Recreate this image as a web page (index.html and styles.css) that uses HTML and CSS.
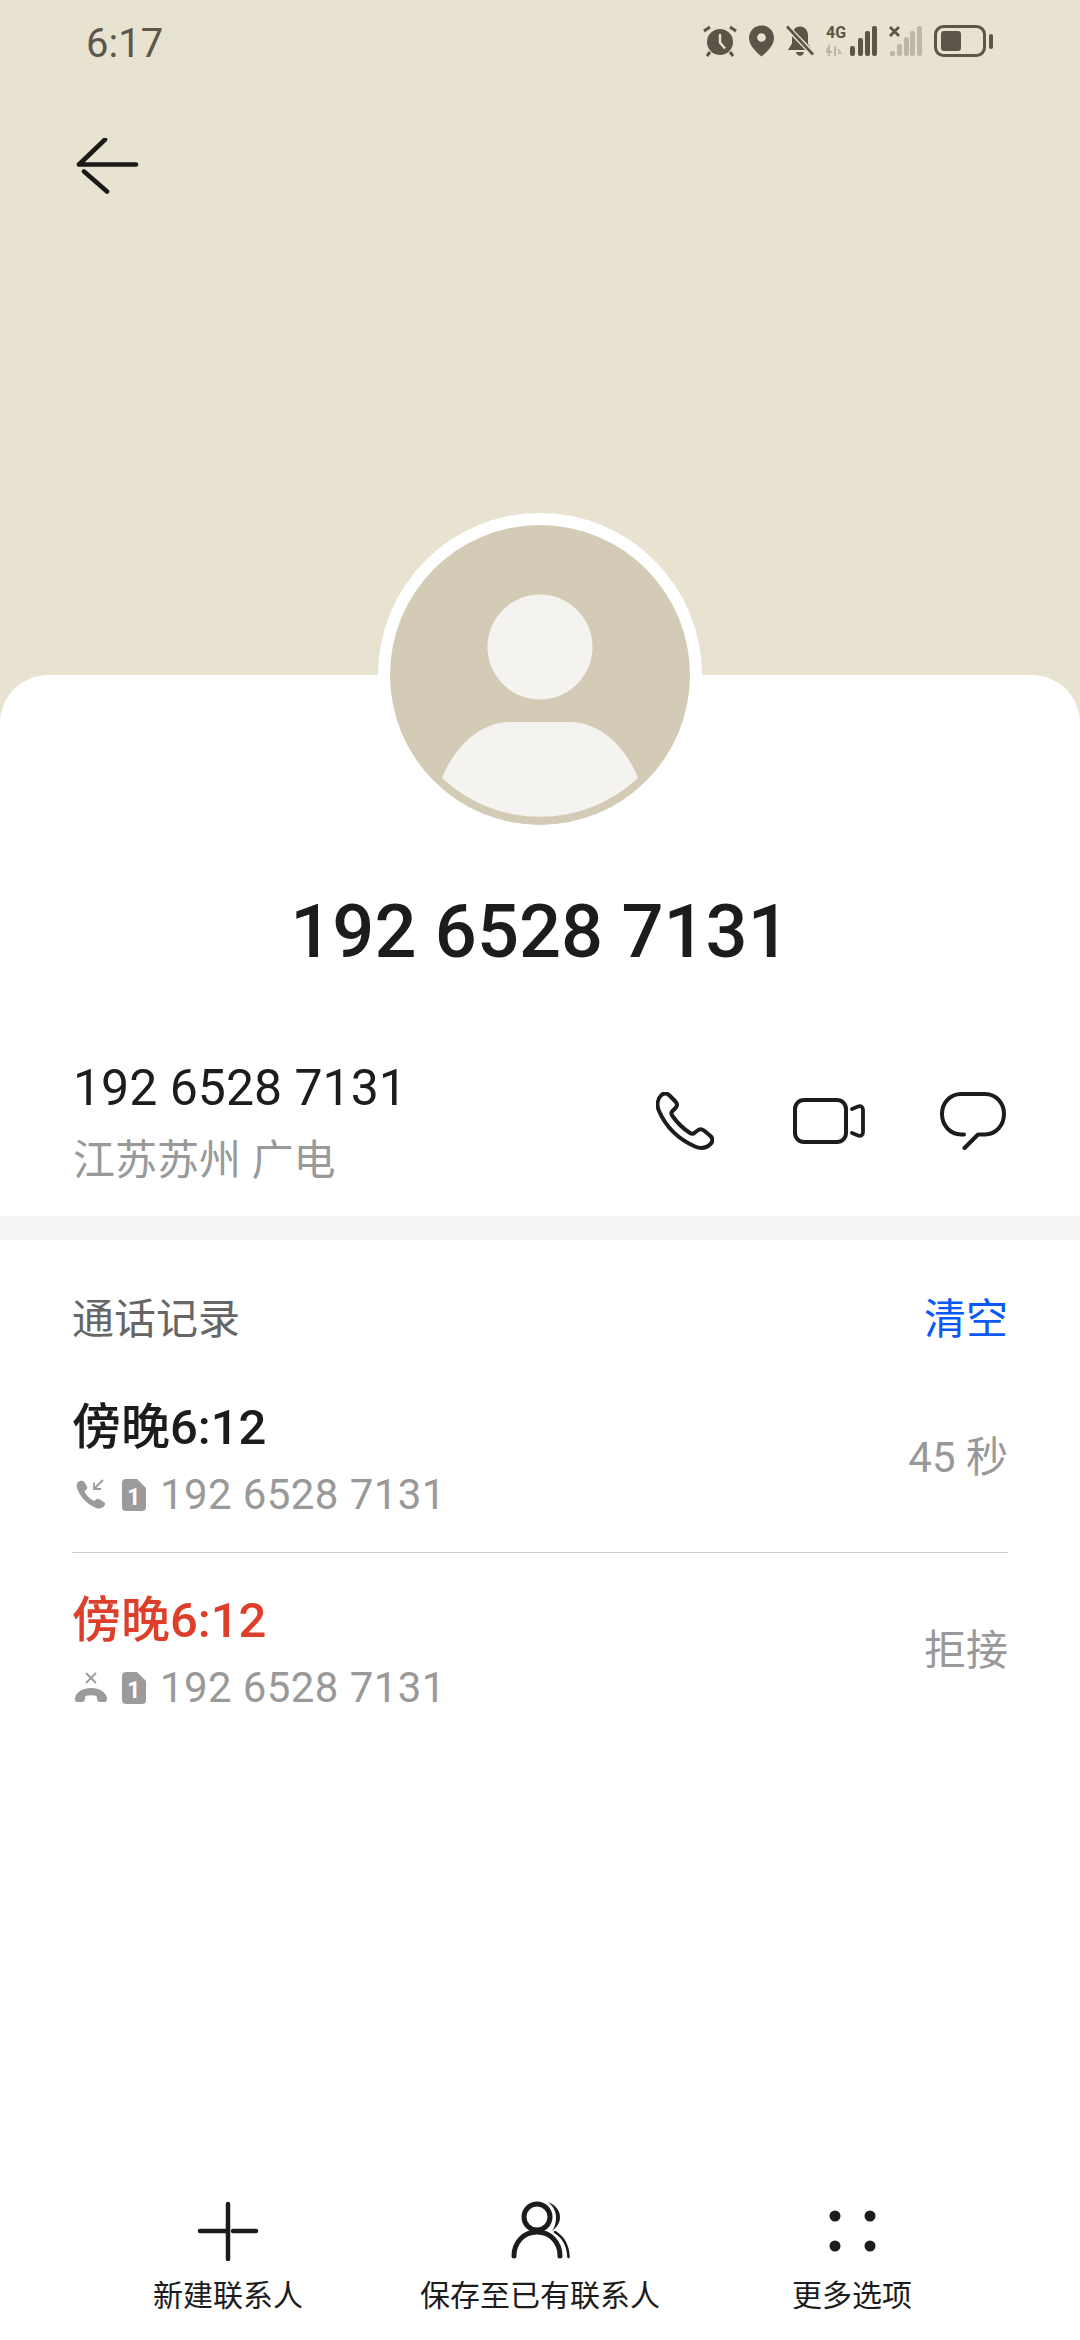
FILE: index.html
```html
<!DOCTYPE html>
<html lang="zh-CN">
  <head>
    <meta charset="UTF-8" />
    <meta name="viewport" content="width=device-width, initial-scale=1.0" />
    <title>通话详情</title>
    <link rel="stylesheet" href="styles.css">
  </head>
  <body>
    <div class="page">
      <div class="header">
        <div class="status-bar">
          <span class="status-time">6:17</span>
          <div class="status-icons">
            <svg width="34" height="32" viewBox="0 0 34 32">
              <circle cx="17" cy="17" r="13" fill="#5a5449"/>
              <path d="M17 9v8.500l5 6" fill="none" stroke="#e8e2d0" stroke-width="2.400"/>
              <path d="M1 6l6-4M33 6l-6-4M7 27l-3 4M27 27l3 4" fill="none" stroke="#5a5449" stroke-width="3"/>
            </svg>
            <svg width="25" height="32" viewBox="0 0 25 32">
              <path d="M12.500 .5C5.500 .5 0 6 0 13c0 7 6 13 12.500 18.500C19 26 25 20 25 13 25 6 19.500 .5 12.500 .5z" fill="#5a5449"/>
              <circle cx="12.500" cy="12.500" r="4.300" fill="#e8e2d0"/>
            </svg>
            <svg width="28" height="32" viewBox="0 0 28 32">
              <path d="M14 1.500c-5 0-8 4-8 9v8l-4 6.500h24l-4-6.500v-8c0-5-3-9-8-9zM10 27h8c-.6 2.500-2 3.800-4 3.800s-3.400-1.300-4-3.800z" fill="#5a5449"/>
              <path d="M0 1l28 29" stroke="#e8e2d0" stroke-width="5.500"/>
              <path d="M1 1.500l26 28" stroke="#5a5449" stroke-width="2.600"/>
            </svg>
            <svg width="51" height="40" viewBox="0 -4 51 40">
              <text class="net-label" x="0" y="13">4G</text>
              <path d="M3 31v-9l-3 5h6M9 21v10" fill="none" stroke="#bdb7a8" stroke-width="2"/>
              <path d="M12 24l3 4h-3" fill="none" stroke="#bdb7a8" stroke-width="1.500"/>
              <rect x="24" y="21" width="5" height="10" rx="2" fill="#5a5449"/>
              <rect x="32" y="13" width="5" height="18" rx="2" fill="#5a5449"/>
              <rect x="39" y="6" width="5" height="25" rx="2" fill="#5a5449"/>
              <rect x="46" y="1" width="5" height="30" rx="2" fill="#5a5449"/>
            </svg>
            <svg width="33" height="32" viewBox="0 0 33 32">
              <path d="M1 2l9 9M10 2l-9 9" stroke="#5a5449" stroke-width="2.800"/>
              <rect x="1" y="26" width="5" height="5" rx="1.500" fill="#bdb7a8"/>
              <rect x="8" y="19" width="5" height="12" rx="2" fill="#bdb7a8"/>
              <rect x="15" y="12" width="5" height="19" rx="2" fill="#bdb7a8"/>
              <rect x="21" y="6" width="5" height="25" rx="2" fill="#bdb7a8"/>
              <rect x="28" y="1" width="5" height="30" rx="2" fill="#bdb7a8"/>
            </svg>
            <svg width="59" height="32" viewBox="0 0 59 32">
              <rect x="1.500" y="1.500" width="49" height="29" rx="8" fill="none" stroke="#5a5449" stroke-width="3"/>
              <rect x="7" y="6" width="20" height="20" rx="3" fill="#5a5449"/>
              <rect x="55" y="9" width="4" height="15" rx="2" fill="#5a5449"/>
            </svg>
          </div>
        </div>
        <svg class="back-icon" width="64" height="60" viewBox="0 0 64 60">
          <path d="M3 26.500L29 1.500M3 26.500H60M8 33.500L31 53.500" fill="none" stroke="#1c1a17" stroke-width="4.600" stroke-linecap="round"/>
        </svg>
      </div>

      <div class="sheet">
        <svg class="avatar" width="324" height="324" viewBox="0 0 324 324">
          <circle cx="162" cy="162" r="162" fill="#fff"/>
          <circle cx="162" cy="162" r="150" fill="#d3cbb5"/>
          <circle cx="162" cy="134" r="52.500" fill="#f4f3ef"/>
          <path d="M64 265C78 230 105 209 132 209H192C219 209 246 230 260 265A143 143 0 0 1 64 265Z" fill="#f4f3ef"/>
        </svg>

        <h1 class="contact-name">192 6528 7131</h1>

        <div class="contact-row">
          <div>
            <div class="contact-number">192 6528 7131</div>
            <div class="contact-place">江苏苏州 广电</div>
          </div>
          <div class="contact-actions">
            <svg class="action-phone" width="58" height="58" viewBox="0 0 58 58">
              <path d="M6 2.500C8.500 .8 11 1.200 13 3L19 9C21.500 11.500 21.500 14 19.500 16L16.500 19C15 20.500 15 22 16.500 24C21 30.500 27 36.500 34 41C36 42.300 37.500 42 39 40.500L41.500 38.500C43.500 36.800 46 37 48 38.500L54.500 44C57 46.500 57 49.500 54.500 52C50.500 56 45 57 39 54.500C22 47 10 35 3 19C.5 13 1.500 6.500 6 2.500Z" fill="none" stroke="#1c1c1c" stroke-width="4" stroke-linejoin="round"/>
            </svg>
            <svg width="72" height="46" viewBox="0 0 72 46">
              <rect x="2" y="2" width="51" height="42" rx="9" fill="none" stroke="#1c1c1c" stroke-width="4"/>
              <path d="M59 11L65 8.500C68 7.500 70 9 70 12V34C70 37 68 38.500 65 37.500L59 35" fill="none" stroke="#1c1c1c" stroke-width="3.800" stroke-linecap="round"/>
            </svg>
            <svg width="66" height="58" viewBox="0 0 66 58">
              <path d="M24 42.500H21C10 42.500 2 33 2 22C2 11 10 2 21 2H45C56 2 64 11 64 22C64 33 56 42.500 45 42.500H38L24.500 56" fill="none" stroke="#1c1c1c" stroke-width="4" stroke-linecap="round" stroke-linejoin="round"/>
            </svg>
          </div>
        </div>

        <div class="band"></div>

        <div class="log">
          <div class="log-head">
            <span class="log-title">通话记录</span>
            <span class="log-clear">清空</span>
          </div>

          <div class="call-row">
            <div>
              <div class="call-time">傍晚6:12</div>
              <div class="call-info">
                <svg class="call-type" width="34" height="32" viewBox="0 0 34 32">
                  <path d="M6 2C3 3 2 6 3 9C6 18 13 25 22 29C26 30.500 29 29 31 26C31.500 24.500 31 23.500 30 23L25 20C24 19.500 23 19.500 22 20.500L20 22C16 20 12.500 16.500 10.500 12.500L12.500 10.500C13.500 9.500 13.500 8.500 13 7.500L10 2.500C9 1.500 7.500 1.500 6 2Z" fill="#9b9b9b"/>
                  <path d="M29 1L20 10M20 3.500V10H27" fill="none" stroke="#9b9b9b" stroke-width="1.800"/>
                </svg>
                <svg class="sim" width="24" height="32" viewBox="0 0 24 32">
                  <path d="M4 0H15L24 9V28Q24 32 20 32H4Q0 32 0 28V4Q0 0 4 0Z" fill="#9b9b9b"/>
                  <text class="sim-num" x="12" y="26">1</text>
                </svg>
                <span>192 6528 7131</span>
              </div>
            </div>
            <span class="call-value">45 秒</span>
          </div>

          <div class="call-row call-row-line">
            <div>
              <div class="call-time call-missed">傍晚6:12</div>
              <div class="call-info">
                <svg class="call-type" width="34" height="32" viewBox="0 0 34 32">
                  <path d="M12 1L22 11M22 1L12 11" stroke="#9b9b9b" stroke-width="1.800"/>
                  <path d="M1 26C2 20 9 16 17 16C25 16 32 20 33 26C33.500 29 32 30 30 30H26C24 30 23.500 29 23 27L22.500 24C19 23 15 23 11.500 24L11 27C10.500 29 10 30 8 30H4C2 30 .5 29 1 26Z" fill="#9b9b9b"/>
                </svg>
                <svg class="sim" width="24" height="32" viewBox="0 0 24 32">
                  <path d="M4 0H15L24 9V28Q24 32 20 32H4Q0 32 0 28V4Q0 0 4 0Z" fill="#9b9b9b"/>
                  <text class="sim-num" x="12" y="26">1</text>
                </svg>
                <span>192 6528 7131</span>
              </div>
            </div>
            <span class="call-value">拒接</span>
          </div>
        </div>

        <div class="bottom-bar">
          <div class="bottom-item">
            <svg width="62" height="62" viewBox="0 0 62 62">
              <path d="M31 5V60" stroke="#1c1c1c" stroke-width="4.500" stroke-linecap="round"/>
              <path d="M3 32H29M36 32H59" stroke="#1c1c1c" stroke-width="4.500" stroke-linecap="round"/>
            </svg>
            <span>新建联系人</span>
          </div>
          <div class="bottom-item">
            <svg width="66" height="62" viewBox="-2 0 66 62">
              <circle cx="28" cy="18" r="13" fill="none" stroke="#1c1c1c" stroke-width="5"/>
              <path d="M5 57C5 44 14 33 28 33C42 33 51 44 51 57" fill="none" stroke="#1c1c1c" stroke-width="5" stroke-linecap="round"/>
              <path d="M39 3C47 6 51 12 51 18C51 24 48 28 43 32C46 28 47 23 47 18C47 12 44 7 39 3Z" fill="#1c1c1c"/>
              <path d="M46 33C54 38 59 47 59.500 58" fill="none" stroke="#1c1c1c" stroke-width="2.600" stroke-linecap="round"/>
            </svg>
            <span>保存至已有联系人</span>
          </div>
          <div class="bottom-item">
            <svg width="62" height="62" viewBox="0 0 62 62">
              <circle cx="14" cy="17" r="5.500" fill="#1c1c1c"/>
              <circle cx="49" cy="17" r="5.500" fill="#1c1c1c"/>
              <circle cx="14" cy="47" r="5.500" fill="#1c1c1c"/>
              <circle cx="49" cy="47" r="5.500" fill="#1c1c1c"/>
            </svg>
            <span>更多选项</span>
          </div>
        </div>
      </div>
    </div>
  </body>
</html>
```

FILE: styles.css
```css
body {
  margin: 0;
  font-family: Roboto, "Noto Sans CJK SC", sans-serif;
  background-color: #fff;
}

.page {
  width: 1080px;
  height: 2340px;
  display: flex;
  flex-direction: column;
  background-color: #e8e2d0;
  overflow: hidden;
}

.header {
  height: 675px;
  flex-shrink: 0;
}

.status-bar {
  display: flex;
  justify-content: space-between;
  align-items: center;
  height: 32px;
  padding: 25px 87px 0 86px;
}

.status-time {
  padding-top: 4px;
  font-size: 40px;
  color: #5c574c;
}

.status-icons {
  display: flex;
  align-items: center;
  gap: 12px;
}

.net-label {
  font-family: Roboto, sans-serif;
  font-size: 16px;
  font-weight: 700;
  fill: #5a5449;
}

.back-icon {
  display: block;
  margin: 81px 0 0 76px;
}

.sheet {
  position: relative;
  flex: 1;
  display: flex;
  flex-direction: column;
  background-color: #fff;
  border-radius: 48px 48px 0 0;
  padding-top: 212px;
}

.avatar {
  position: absolute;
  top: -162px;
  left: 378px;
}

.contact-name {
  margin: 0;
  height: 90px;
  line-height: 90px;
  text-align: center;
  font-size: 74px;
  font-weight: 500;
  color: #1c1c1c;
}

.contact-row {
  display: flex;
  justify-content: space-between;
  align-items: center;
  padding: 81px 74px 28px 73px;
}

.contact-number {
  line-height: 60px;
  font-size: 50px;
  color: #1c1c1c;
}

.contact-place {
  margin-top: 16px;
  line-height: 54px;
  font-size: 42px;
  color: #999;
}

.contact-actions {
  display: flex;
  align-items: center;
  gap: 75px;
  margin-top: -4px;
}

.action-phone {
  margin-right: 4px;
}

.band {
  height: 24px;
  background-color: #f5f5f5;
}

.log {
  padding: 35px 72px 0;
}

.log-head {
  display: flex;
  justify-content: space-between;
  align-items: center;
  height: 80px;
  margin-bottom: 5px;
  font-size: 42px;
}

.log-title {
  color: #666;
}

.log-clear {
  color: #0a59f7;
}

.call-row {
  display: flex;
  justify-content: space-between;
  align-items: center;
  padding: 38px 0 27px;
}

.call-row-line {
  border-top: 1px solid #ccc;
}

.call-time {
  line-height: 60px;
  font-size: 49px;
  font-weight: 500;
  color: #1c1c1c;
}

.call-missed {
  color: #de3f2a;
}

.call-info {
  display: flex;
  align-items: center;
  margin-top: 7px;
  line-height: 60px;
  font-size: 42px;
  letter-spacing: 0.4px;
  color: #999;
}

.call-type {
  margin: 0 14px 0 2px;
}

.sim {
  margin-right: 14px;
}

.sim-num {
  font-family: Roboto, sans-serif;
  font-size: 23px;
  font-weight: 700;
  fill: #fff;
  text-anchor: middle;
}

.call-value {
  margin-bottom: 17px;
  font-size: 42px;
  color: #999;
}

.bottom-bar {
  margin-top: auto;
  display: grid;
  grid-template-columns: repeat(3, 1fr);
  padding: 0 72px 24px;
}

.bottom-item {
  display: flex;
  flex-direction: column;
  align-items: center;
  gap: 15px;
  line-height: 40px;
  font-size: 30px;
  color: #1c1c1c;
}
```
